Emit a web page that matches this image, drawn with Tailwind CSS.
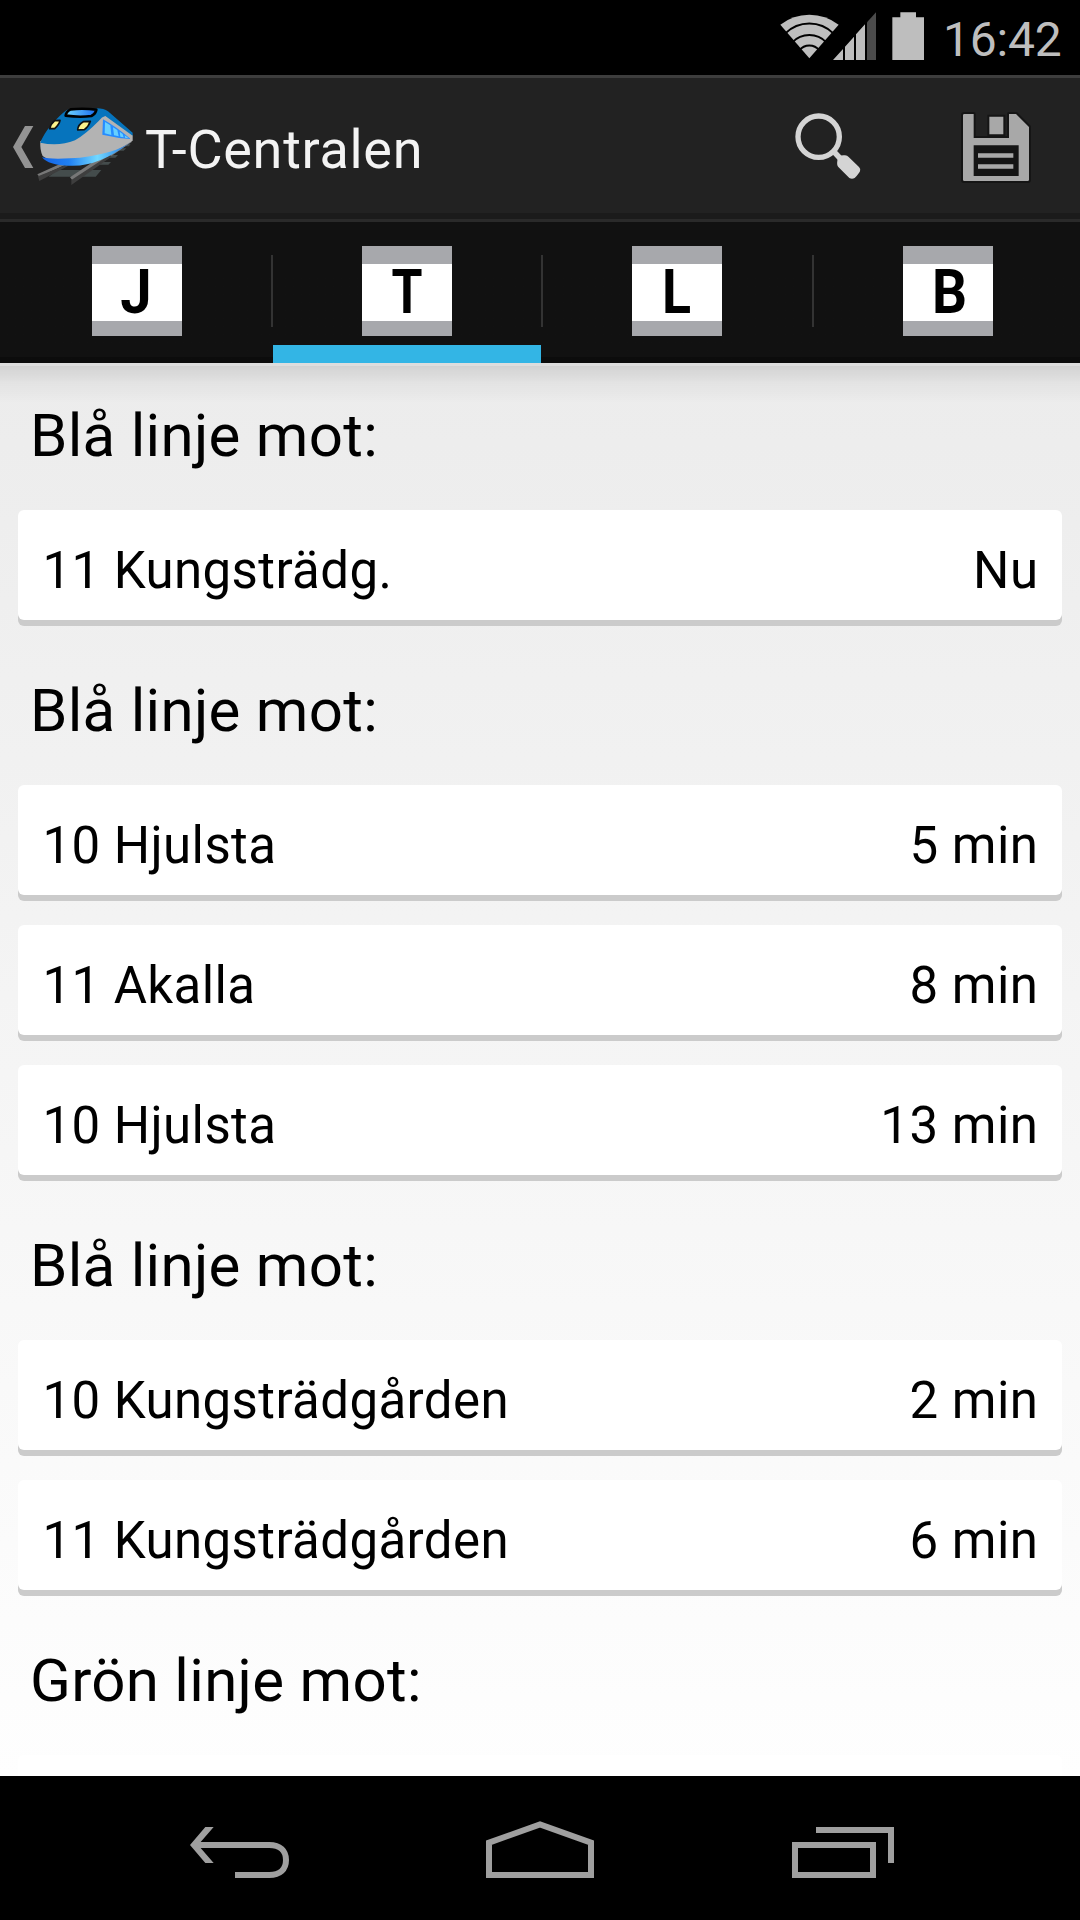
<!DOCTYPE html>
<html lang="sv">
<head>
<meta charset="utf-8">
<title>T-Centralen</title>
<script src="https://cdn.jsdelivr.net/npm/@tailwindcss/browser@4"></script>
</head>
<body class="bg-black">
<div class="flex h-[1920px] w-[1080px] flex-col overflow-hidden bg-black font-[Roboto,sans-serif]">

  <!-- Status bar -->
  <div class="flex h-[75px] shrink-0 justify-end gap-[13px] bg-black pr-[17px] text-[#bebebe]">
    <svg class="h-[75px] w-[160px]" viewBox="30 0 480 225" fill="#bebebe">
      <path d="M148 175 61 74Q99 44 148 44T236 74Z"/>
      <g fill="none" stroke="#000" stroke-width="6">
        <path d="M76 100A102 102 0 0 1 220 100"/>
        <path d="M97 127A70 70 0 0 1 199 127"/>
        <path d="M118 151A38 38 0 0 1 178 151"/>
      </g>
      <path d="M219 180 249 147V180ZM255 180V140L282 110V180ZM288 180V103L315 73V180Z"/>
      <path fill="#4b4b4b" d="M321 180V67L348 37V180Z"/>
      <path d="M397 180V52H421V37H468V52H492V180Z"/>
    </svg>
    <div class="w-[120px] pt-[2px] text-5xl leading-[75px] tracking-[-0.2px] whitespace-nowrap">16:42</div>
  </div>

  <!-- Action bar -->
  <div class="h-[3px] shrink-0 bg-[#3d3d3d]"></div>
  <div class="flex h-[135px] shrink-0 bg-[#222222]">
    <svg class="h-[135px] w-[145px] shrink-0" viewBox="0 24 435 405">
      <defs>
        <linearGradient id="skirt" x1="0" x2="1" y1="0" y2="0">
          <stop offset="0" stop-color="#1464e8"/><stop offset=".3" stop-color="#2080f2"/><stop offset=".62" stop-color="#72d8ff"/><stop offset="1" stop-color="#1a6ee0"/>
        </linearGradient>
        <linearGradient id="glass" x1="0" x2="1" y1="0" y2="0">
          <stop offset="0" stop-color="#6fd6ff"/><stop offset="1" stop-color="#1a6cf0"/>
        </linearGradient>
      </defs>
      <path fill="#939393" d="M75 168H100L64 231 100 294H75L39 231Z"/>
      <path fill="#444c4c" d="M172 300H304L287 320H146ZM306 276H333L325 284H298ZM336 255H354L346 263H326ZM358 235H379L371 242H350ZM374 223H392L386 229H368Z"/>
      <path fill="#777" d="M112 313 175 284H196L118 320ZM210 322 300 262 392 210 395 216 320 268 218 332Z"/>
      <path fill="#3e3e3e" d="M114 319 200 284 204 288 118 333ZM214 330 330 254 334 260 214 345Z"/>
      <path fill="#b3b3b3" d="M121 214Q119 240 128 258L150 272 230 284Q300 276 398 212L398 196Q350 148 320 128L230 150Z"/>
      <path fill="url(#skirt)" d="M126 262Q150 268 210 265T330 245Q368 234 394 215Q345 252 300 271T205 287Q146 286 126 262Z"/>
      <path fill="#0674bd" d="M121 218Q130 193 154 164Q180 135 200 120Q225 113 290 115Q312 115 324 124L398 188 398 197 316 138Q306 140 296 153Q258 192 225 211Q176 230 121 218Z"/>
      <path fill="url(#glass)" stroke="#000" stroke-width="8" stroke-linejoin="round" d="M212 118Q250 114 289 119Q287 131 274 138Q240 143 197 137Q198 125 212 118Z"/>
      <path fill="#fdf38c" stroke="#111" stroke-width="5" stroke-linejoin="round" d="M164 152 180 151Q178 163 164 176H149Q152 162 164 152ZM250 155 271 154Q266 170 253 179L233 180Q234 163 250 155Z"/>
      <path fill="#268cff" d="M309 148Q348 170 392 207Q350 204 307 194Z"/>
      <path fill="#67d0ff" d="M315 156 331 166 334 195 314 190ZM339 172 352 180 356 199 342 196ZM359 185 368 192 371 202 361 200ZM374 196 386 205 375 203Z"/>
    </svg>
    <div class="flex-1 pt-2 text-[54px] leading-[127px] tracking-[0.7px] whitespace-nowrap text-[#f3f3f3]">T-Centralen</div>
    <svg class="h-[135px] w-[160px]" viewBox="0 -6 480 405">
      <circle cx="176" cy="170" r="62" fill="none" stroke="#d4d4d4" stroke-width="16"/>
      <path d="M218 211 244 239" stroke="#d4d4d4" stroke-width="17"/>
      <path fill="#d4d4d4" d="M232 242Q232 234 239 229T255 226Q262 227 266 231L297 261Q303 267 300 274T284 294Q276 299 268 294L235 261Q230 256 232 242Z"/>
    </svg>
    <svg class="h-[135px] w-[160px]" viewBox="480 -6 480 405">
      <path fill="#a8a8a8" stroke="#151515" stroke-width="12" stroke-linejoin="round" paint-order="stroke" d="M613 102H641V174H747V102H768L807 141V299Q807 303 803 303H613Q609 303 609 299V106Q609 102 613 102Z"/>
      <path fill="#151515" d="M641 196H776V288H641ZM682 104H736V169H682Z"/>
      <path fill="#a8a8a8" d="M654 220H760V233H654ZM654 253H760V266H654ZM688 110H730V163H688Z"/>
    </svg>
  </div>
  <div class="h-[6px] shrink-0 bg-[#1b1b1b]"></div>
  <div class="h-[3px] shrink-0 bg-[#2a2a2a]"></div>

  <!-- Tabs -->
  <div class="flex h-[141px] shrink-0 bg-linear-to-b from-[#111111] from-96% to-[#0c0c0c] to-96%">
    <div class="flex w-[271px] justify-center pt-6 pl-[3px]">
      <div class="flex h-[90px] w-[90px] items-center justify-center border-t-[18px] border-b-[15px] border-[#a7a8ac] bg-white text-[61px] leading-[57px] font-bold text-black"><span class="-ml-0.5 scale-x-92">J</span></div>
    </div>
    <div class="mt-[33px] h-[72px] w-[2px] bg-[#333333]"></div>
    <div class="flex w-[268px] flex-col items-center justify-between pt-6">
      <div class="flex h-[90px] w-[90px] items-center justify-center border-t-[18px] border-b-[15px] border-[#a7a8ac] bg-white text-[61px] leading-[57px] font-bold text-black"><span class="scale-x-82">T</span></div>
      <div class="h-[18px] w-full bg-[#33b5e5]"></div>
    </div>
    <div class="mt-[33px] h-[72px] w-[2px] bg-[#333333]"></div>
    <div class="flex w-[269px] justify-center pt-6 pr-[2px]">
      <div class="flex h-[90px] w-[90px] items-center justify-center border-t-[18px] border-b-[15px] border-[#a7a8ac] bg-white text-[61px] leading-[57px] font-bold text-black"><span class="scale-x-88">L</span></div>
    </div>
    <div class="mt-[33px] h-[72px] w-[2px] bg-[#333333]"></div>
    <div class="flex flex-1 justify-center pt-6 pl-[2px]">
      <div class="flex h-[90px] w-[90px] items-center justify-center border-t-[18px] border-b-[15px] border-[#a7a8ac] bg-white text-[61px] leading-[57px] font-bold text-black"><span class="ml-0.5 scale-x-90">B</span></div>
    </div>
  </div>

  <!-- Departures -->
  <div class="relative h-[1413px] shrink-0 overflow-hidden bg-linear-to-b from-[#ececec] to-[#fefefe] px-[18px] text-black">
    <div class="absolute inset-x-0 top-0 h-[40px] border-t-[3px] border-black/6 bg-linear-to-b from-black/11 via-black/4 via-45% to-transparent"></div>
    <div id="list" class="flex flex-col"></div>
  </div>

  <!-- Navigation bar -->
  <div class="flex h-[144px] shrink-0 bg-black">
    <svg class="h-[144px] w-[360px]" viewBox="-480 108 1080 432">
      <path fill="#9f9f9f" d="M90 315 136 261H161L122 306V324L161 369H136Z"/>
      <path fill="none" stroke="#9f9f9f" stroke-width="18" d="M110 315H328C360 315 378 332 378 360S360 405 328 405H225"/>
    </svg>
    <svg class="h-[144px] w-[360px]" viewBox="600 108 1080 432">
      <path fill="none" stroke="#9f9f9f" stroke-width="18" d="M987 405V308L1140 253 1293 308V405Z"/>
    </svg>
    <svg class="h-[144px] w-[360px]" viewBox="360 108 1080 432">
      <path fill="none" stroke="#9f9f9f" stroke-width="18" d="M585 315H819V405H585ZM648 270H873V369"/>
    </svg>
  </div>
</div>
<script>
const groups = [
  ["Blå linje mot:", [["11 Kungsträdg.", "Nu"]]],
  ["Blå linje mot:", [["10 Hjulsta", "5 min"], ["11 Akalla", "8 min"], ["10 Hjulsta", "13 min"]]],
  ["Blå linje mot:", [["10 Kungsträdgården", "2 min"], ["11 Kungsträdgården", "6 min"]]],
  ["Grön linje mot:", [["", ""]]],
];
document.getElementById("list").innerHTML = groups.map(([title, rows], i) => `
  <section class="${i ? "mt-[18px]" : ""}">
    <h2 class="h-[147px] pl-3 text-[60px] leading-[146px] tracking-[0.3px]">${title}</h2>
    <div class="flex flex-col gap-[30px]">
      ${rows.map(([name, time]) => `
      <div class="flex h-[110px] justify-between rounded-[6px] bg-white pt-[11px] pr-[23.5px] pl-[24.5px] text-[51px] leading-[99px] shadow-[0_6px_0_#cbcbcb]">
        <span class="tracking-[0.4px]">${name}</span><span class="tracking-[0.5px]">${time}</span>
      </div>`).join("")}
    </div>
  </section>`).join("");
</script>
</body>
</html>
